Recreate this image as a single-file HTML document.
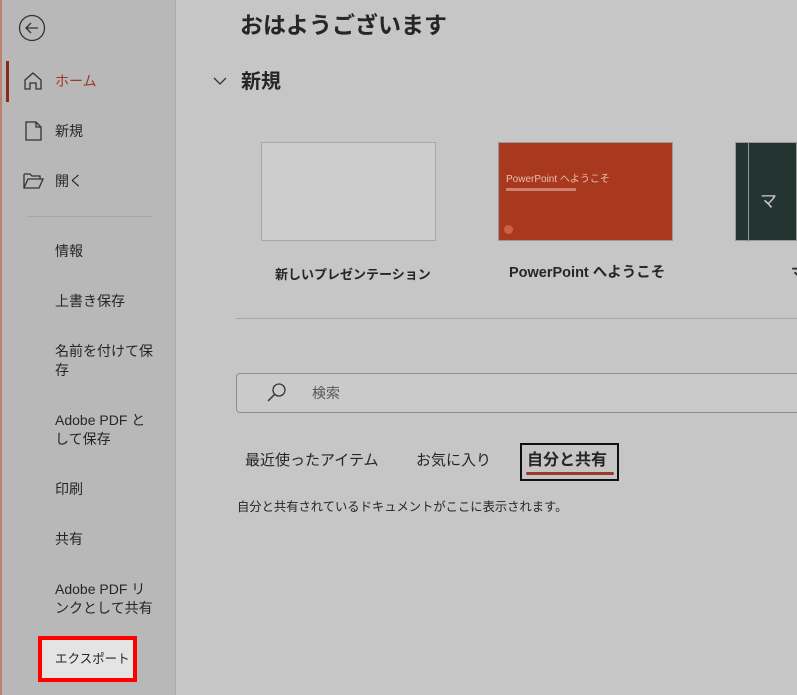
<!DOCTYPE html>
<html><head><meta charset="utf-8"><style>
*{margin:0;padding:0;box-sizing:border-box}
body{width:797px;height:695px;overflow:hidden;background:#c6c6c6;font-family:"Liberation Sans","Noto Sans CJK JP",sans-serif;color:#262626;position:relative}
.side{position:absolute;left:0;top:0;width:176px;height:695px;background:#b8b8b8;border-right:1px solid #a9a9a9}
.side .edge{position:absolute;left:0;top:0;width:2px;height:695px;background:#c08070}
.t{position:absolute;font-size:14px;color:#262626;white-space:nowrap;line-height:19px}
.abs{position:absolute}
</style></head><body>
<div class="side">
<div class="edge"></div>
<svg class="abs" style="left:18px;top:14px" width="28" height="28" viewBox="0 0 28 28"><circle cx="14" cy="14" r="12.5" fill="none" stroke="#333" stroke-width="1.3"/><path d="M8 14h12M13 9l-5 5 5 5" fill="none" stroke="#333" stroke-width="1.3"/></svg>
<div class="abs" style="left:6px;top:61px;width:3px;height:41px;background:#8b2a1a"></div>
<svg class="abs" style="left:23px;top:71px" width="20" height="20" viewBox="0 0 20 20"><path d="M2 9L10 2l8 7v9h-5v-6H7v6H2z" fill="none" stroke="#333" stroke-width="1.3"/></svg>
<div class="t" style="left:55px;top:72px;color:#9b3a25">ホーム</div>
<svg class="abs" style="left:25px;top:121px" width="18" height="20" viewBox="0 0 18 20"><path d="M1 1h10l5 5v13H1z M11 1v5h5" fill="none" stroke="#333" stroke-width="1.3"/></svg>
<div class="t" style="left:55px;top:122px">新規</div>
<svg class="abs" style="left:23px;top:173px" width="22" height="16" viewBox="0 0 22 16"><path d="M1 1h6l2 2h8v3 M1 1v14h15l4-9H5L1 15" fill="none" stroke="#333" stroke-width="1.3"/></svg>
<div class="t" style="left:55px;top:172px">開く</div>
<div class="abs" style="left:27px;top:216px;width:125px;height:1px;background:#a5a5a5"></div>
<div class="t" style="left:55px;top:242px">情報</div>
<div class="t" style="left:55px;top:292px">上書き保存</div>
<div class="t" style="left:55px;top:342px">名前を付けて保<br>存</div>
<div class="t" style="left:55px;top:411px">Adobe PDF と<br>して保存</div>
<div class="t" style="left:55px;top:480px">印刷</div>
<div class="t" style="left:55px;top:530px">共有</div>
<div class="t" style="left:55px;top:580px">Adobe PDF リ<br>ンクとして共有</div>
<div class="abs" style="left:38px;top:636px;width:99px;height:46px;border:4px solid #f00;background:#e4e4e4"></div>
<div class="t" style="left:55px;top:650px;font-size:12.5px">エクスポート</div>
</div>
<div class="t" style="left:240px;top:9px;font-size:23px;font-weight:bold;line-height:32px">おはようございます</div>
<svg class="abs" style="left:213px;top:76px" width="14" height="10" viewBox="0 0 14 10"><path d="M1 2l6 6 6-6" fill="none" stroke="#333" stroke-width="1.3"/></svg>
<div class="t" style="left:241px;top:69px;font-size:20px;font-weight:bold;line-height:26px">新規</div>
<div class="abs" style="left:261px;top:142px;width:175px;height:99px;background:#cdcdcd;border:1px solid #a8a8a8"></div>
<div class="t" style="left:275px;top:265px;font-weight:bold;font-size:13px">新しいプレゼンテーション</div>
<div class="abs" style="left:498px;top:142px;width:175px;height:99px;background:#a8391f;border:1px solid #999">
<div style="position:absolute;left:7px;top:27px;font-size:10px;color:#e8c0b0;white-space:nowrap">PowerPoint へようこそ</div>
<div style="position:absolute;left:7px;top:45px;width:70px;height:3px;background:#d08070"></div>
<div style="position:absolute;left:5px;top:82px;width:9px;height:9px;border-radius:50%;background:#d06040"></div>
</div>
<div class="t" style="left:509px;top:264px;font-weight:bold;font-size:14.5px">PowerPoint へようこそ</div>
<div class="abs" style="left:735px;top:142px;width:62px;height:99px;background:#243430;border:1px solid #999">
<div style="position:absolute;left:12px;top:0;width:1px;height:99px;background:#8a9a96"></div>
<div style="position:absolute;left:24px;top:44px;color:#ccc;font-size:17px">マ</div>
</div>
<div class="t" style="left:791px;top:264px;font-weight:bold">マ</div>
<div class="abs" style="left:236px;top:318px;width:561px;height:1px;background:#a8a8a8"></div>
<div class="abs" style="left:236px;top:373px;width:570px;height:40px;border:1px solid #8e8e8e;border-radius:4px;background:#cacaca"></div>
<svg class="abs" style="left:266px;top:382px" width="22" height="22" viewBox="0 0 22 22"><circle cx="13" cy="8" r="6" fill="none" stroke="#333" stroke-width="1.3"/><path d="M9 12l-7 7" stroke="#333" stroke-width="1.5"/></svg>
<div class="t" style="left:312px;top:384px;color:#555">検索</div>
<div class="t" style="left:245px;top:451px;font-size:15px;line-height:20px">最近使ったアイテム</div>
<div class="t" style="left:416px;top:451px;font-size:15px;line-height:20px">お気に入り</div>
<div class="abs" style="left:520px;top:443px;width:99px;height:38px;border:2px solid #111"></div>
<div class="t" style="left:527px;top:451px;font-size:16px;line-height:20px;font-weight:bold">自分と共有</div>
<div class="abs" style="left:526px;top:472px;width:88px;height:3px;background:#9b3a25;border-radius:2px"></div>
<div class="t" style="left:237px;top:498px;font-size:12.3px">自分と共有されているドキュメントがここに表示されます。</div>
</body></html>
